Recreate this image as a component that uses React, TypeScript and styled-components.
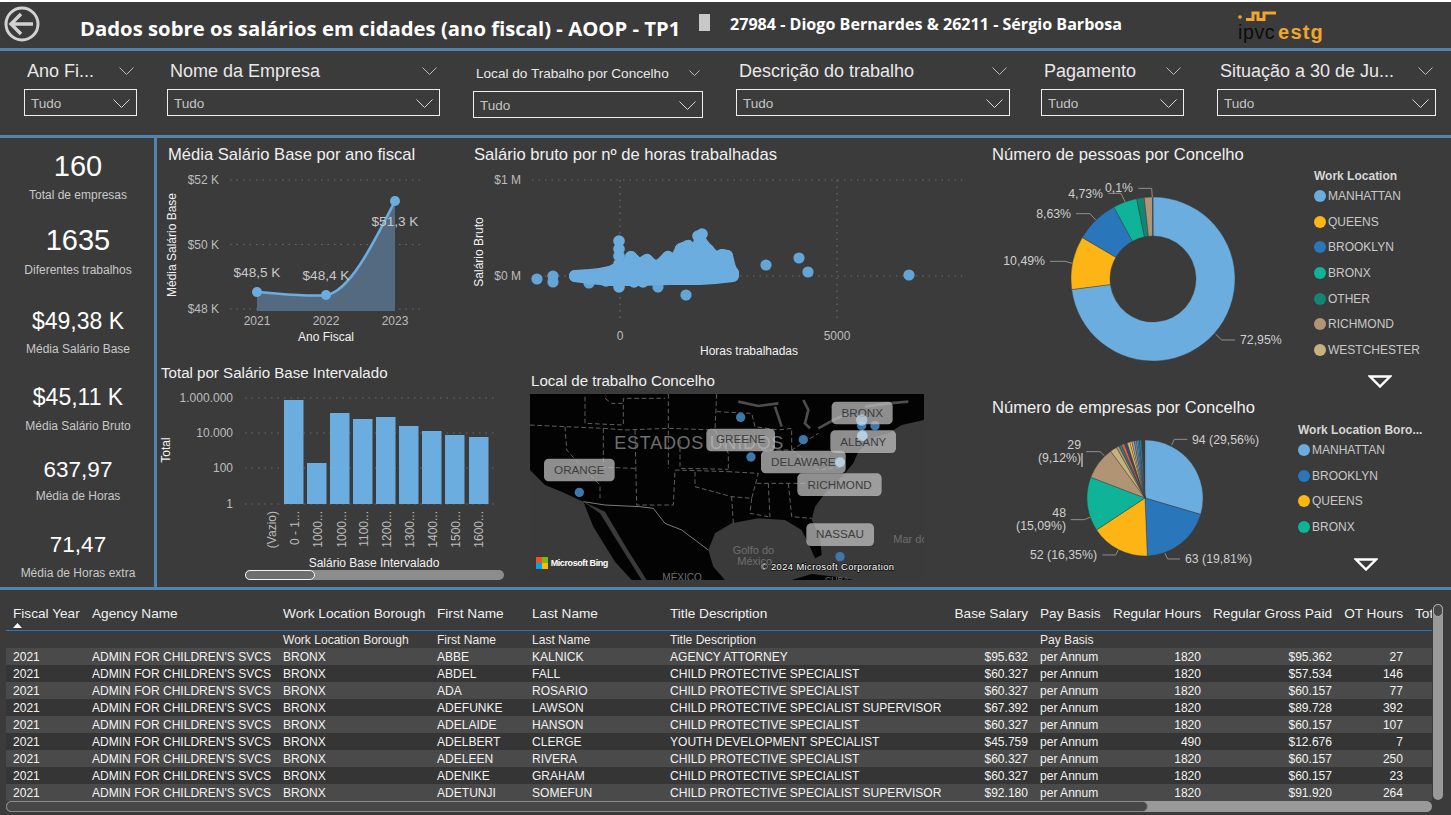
import React from "react";
import styled, { createGlobalStyle } from "styled-components";

const BG = "#3b3b3b";
const RULE = "#5283ad";
const SKY = "#6cade0";
const SANS = `"Liberation Sans", Arial, sans-serif`;

const Global = createGlobalStyle`
  html, body { margin: 0; padding: 0; background: ${BG}; }
  body { font-family: ${SANS}; }
`;

const Page = styled.div`
  width: 1451px; height: 815px; overflow: hidden; background: ${BG}; color: #fff;
  display: flex; flex-direction: column;
`;
const Header = styled.header`
  height: 46px; border-top: 2px solid #fff; display: flex; align-items: flex-start; flex: none;
`;
const BackIcon = styled.svg`
  width: 36px; height: 36px; margin: 4px 0 0 4px; flex: none;
`;
const HeaderTitle = styled.h1`
  width: 619px; margin: 15px 0 0 40px; flex: none; white-space: nowrap;
  font: 700 20.3px/22px "Open Sans", sans-serif; color: #fff;
`;
const Marker = styled.div`
  width: 11px; height: 17px; margin-top: 12px; background: #c8c8c8; flex: none;
`;
const Authors = styled.div`
  width: 508px; margin: 12px 0 0 20px; flex: none; white-space: nowrap;
  font: 700 16.1px/20px "Open Sans", sans-serif; color: #fff;
`;
const Logo = styled.div`
  width: 90px; flex: none; margin-top: 9px; display: flex; flex-direction: column;
`;
const LogoWave = styled.svg`
  width: 42px; height: 11px; display: block;
`;
const LogoWords = styled.div`
  display: flex; align-items: baseline; margin-top: 1px; line-height: 18px;
`;
const LogoIpvc = styled.span`
  font: 400 19.5px/18px "Liberation Sans", sans-serif; color: #0c0c0c; letter-spacing: .6px;
`;
const LogoEstg = styled.span`
  font: 700 20px/18px "Liberation Sans", sans-serif; color: #f2a62a; margin-left: 3px; letter-spacing: 1.2px;
`;
const Rule = styled.div`
  height: 3px; background: ${RULE}; flex: none;
`;
const Filters = styled.section`
  height: 84px; flex: none; display: flex; padding: 8px 0 0 24px; box-sizing: border-box;
`;
const Slicer = styled.div<{ $w: number; $mr: number; $pt?: number }>`
  width: ${p => p.$w}px; margin-right: ${p => p.$mr}px; padding-top: ${p => p.$pt ?? 0}px; flex: none;
`;
const SlicerHead = styled.div`
  height: 24px; padding: 0 3px; display: flex; align-items: center; justify-content: space-between;
`;
const SlicerLabel = styled.span<{ $small?: boolean }>`
  font-size: ${p => (p.$small ? 13.6 : 18)}px; color: #e8e8e8; white-space: nowrap;
`;
const Dropdown = styled.div`
  height: 27px; margin-top: 6px; box-sizing: border-box; border: 1px solid #eee;
  padding: 2px 6px 0; display: flex; align-items: center; justify-content: space-between;
  font-size: 13.5px; color: #c4c4c4;
`;
const Chevron = styled.svg<{ $w: number; $h: number }>`
  width: ${p => p.$w}px; height: ${p => p.$h}px; flex: none;
`;
const Main = styled.main`
  height: 449px; flex: none; display: flex;
`;
const KpiColumn = styled.aside`
  width: 157px; flex: none; padding: 11px 0 0 2px; box-sizing: border-box;
  border-right: 3px solid ${RULE};
`;
const Kpi = styled.div<{ $h: number }>`
  height: ${p => p.$h}px; text-align: center;
`;
const KpiValue = styled.div<{ $size: number }>`
  font-size: ${p => p.$size}px; line-height: 34px; color: #fff;
`;
const KpiLabel = styled.div<{ $mt: number }>`
  font-size: 12px; line-height: 14px; color: #c8c8c8; margin-top: ${p => p.$mt}px;
`;
const Center = styled.div`
  width: 828px; flex: none; display: flex; flex-direction: column;
`;
const ChartRow = styled.div<{ $h: number }>`
  height: ${p => p.$h}px; display: flex; flex: none;
`;
const Panel = styled.div<{ $w: number }>`
  width: ${p => p.$w}px; flex: none;
`;
const PanelTitle = styled.h2<{ $x: number; $top: number }>`
  margin: ${p => p.$top}px 0 0 ${p => p.$x}px; font-size: 16.6px; line-height: 18px; font-weight: 400;
  color: #f0f0f0; white-space: nowrap;
`;
const SmallTitle = styled(PanelTitle)`
  font-size: 15.1px; line-height: 17px;
`;
const ChartSvg = styled.svg<{ $w: number; $h: number }>`
  display: block; width: ${p => p.$w}px; height: ${p => p.$h}px; flex: none;
`;
const MapFrame = styled.div`
  width: 394px; height: 186px; margin: 5px 0 0 5px;
`;
const ChartScroll = styled.div`
  width: 259px; height: 10px; margin: 2px 0 0 88px; border-radius: 5px; background: #8c8c8c;
`;
const ChartThumb = styled.div`
  width: 70px; height: 10px; box-sizing: border-box; border: 1.5px solid #f2f2f2; border-radius: 5px;
  background: #6e6e6e;
`;
const Right = styled.div`
  flex: 1; min-width: 0; display: flex; flex-direction: column;
`;
const RightPanel = styled.div<{ $h: number }>`
  height: ${p => p.$h}px; flex: none; overflow: hidden;
`;
const PanelBody = styled.div`
  display: flex;
`;
const Legend = styled.div<{ $pt: number }>`
  padding-top: ${p => p.$pt}px;
`;
const LegendTitle = styled.div`
  font-size: 12px; line-height: 13px; font-weight: 700; color: #d6d6d6; white-space: nowrap;
`;
const LegendRow = styled.div`
  height: 25.7px; display: flex; align-items: center; gap: 2px; font-size: 12px; color: #c8c8c8; white-space: nowrap;
`;
const LegendDot = styled.span<{ $c: string }>`
  width: 12px; height: 12px; border-radius: 50%; background: ${p => p.$c}; flex: none;
`;
const MoreIcon = styled.svg<{ $ml: number; $mt: number }>`
  display: block; width: 24px; height: 13px; margin: ${p => p.$mt}px 0 0 ${p => p.$ml}px;
`;
const AxisText = styled.text`
  font-family: ${SANS}; font-size: 12px; fill: #bdbdbd;
`;
const AxisName = styled(AxisText)`
  fill: #f2f2f2;
`;
const DataLabel = styled(AxisText)`
  font-size: 13.6px; fill: #c8c8c8;
`;
const PieLabel = styled(AxisText)`
  font-size: 12.3px; fill: #cfcfcf;
`;
const MapChipText = styled.text`
  font-family: ${SANS}; font-size: 35px; fill: #3c3c3c; text-anchor: middle;
`;
const MapGhost = styled.text<{ $s: number }>`
  font-family: ${SANS}; font-size: ${p => p.$s}px; fill: #6e6e6e;
`;
const MapNote = styled.text<{ $s: number; $w?: number }>`
  font-family: ${SANS}; font-size: ${p => p.$s}px; font-weight: ${p => p.$w ?? 400}; fill: #fff;
  paint-order: stroke;
`;
const TableSection = styled.section`
  flex: 1; min-height: 0; display: flex; padding-left: 6px;
`;
const TableArea = styled.div`
  width: 1426px; flex: none;
`;
const Row = styled.div`
  display: grid; grid-template-columns: 86px 191px 154px 95px 138px 280px 90px 70px 91px 131px 71px 29px;
`;
const HeadRow = styled(Row)`
  height: 40px; padding-top: 16px; box-sizing: border-box; font-size: 13.65px; line-height: 16px; color: #f0f0f0;
`;
const HeadLine = styled.div`
  height: 1px; background: #2a76bb;
`;
const FilterRow = styled(Row)`
  height: 17px; font-size: 12.05px; line-height: 19px; color: #ececec;
`;
const DataRow = styled(Row)<{ $odd: boolean }>`
  height: 17px; font-size: 12.05px; line-height: 19px; color: #f2f2f2;
  background: ${p => (p.$odd ? "#4a4a4a" : "#353535")};
`;
const Cell = styled.div<{ $right?: boolean; $pad?: number }>`
  white-space: nowrap;
  text-align: ${p => (p.$right ? "right" : "left")};
  padding: ${p => (p.$right ? `0 ${p.$pad ?? 0}px 0 0` : `0 0 0 ${p.$pad ?? 0}px`)};
`;
const ClippedCell = styled(Cell)`
  overflow: hidden;
`;
const SortMark = styled.svg`
  display: block; width: 9px; height: 5px; margin: 1px 0 0 0;
`;
const HScroll = styled.div`
  height: 11px; background: #9a9a9a; border-radius: 6px;
`;
const HThumb = styled.div`
  width: 1142px; height: 11px; box-sizing: border-box; background: #474747; border: 1.5px solid #8c8c8c; border-radius: 6px;
`;
const VScroll = styled.div`
  width: 10px; height: 196px; margin: 14px 0 0 1px; background: #9a9a9a; border-radius: 5px; flex: none;
`;
const VThumb = styled.div`
  width: 10px; height: 13px; box-sizing: border-box; background: #474747; border: 1.5px solid #aaa; border-radius: 5px;
`;

const DropIcon = ({ w, h, c = "#d8d8d8" }: { w: number; h: number; c?: string }) => (
  <Chevron $w={w} $h={h} viewBox={`0 0 ${w} ${h}`}>
    <polyline points={`0.5,0.5 ${w / 2},${h - 0.5} ${w - 0.5},0.5`} fill="none" stroke={c} strokeWidth="1" />
  </Chevron>
);

const slicers = [
  { t: "Ano Fi...", w: 113, mr: 30 },
  { t: "Nome da Empresa", w: 273, mr: 33 },
  { t: "Local do Trabalho por Concelho", w: 230, mr: 33, small: true, pt: 2 },
  { t: "Descrição do trabalho", w: 274, mr: 31 },
  { t: "Pagamento", w: 143, mr: 33 },
  { t: "Situação a 30 de Ju...", w: 219, mr: 0 },
];

const kpis = [
  { v: "160", l: "Total de empresas", s: 29, h: 74, mt: 5 },
  { v: "1635", l: "Diferentes trabalhos", s: 29, h: 81, mt: 6 },
  { v: "$49,38 K", l: "Média Salário Base", s: 23, h: 76, mt: 4 },
  { v: "$45,11 K", l: "Média Salário Bruto", s: 23, h: 73, mt: 5 },
  { v: "637,97", l: "Média de Horas", s: 22.5, h: 75, mt: 2 },
  { v: "71,47", l: "Média de Horas extra", s: 22.5, h: 54, mt: 4 },
];

const polar = (cx: number, cy: number, r: number, deg: number) => {
  const a = ((deg - 90) * Math.PI) / 180;
  return [cx + r * Math.cos(a), cy + r * Math.sin(a)];
};
const slicePath = (cx: number, cy: number, r: number, r0: number, a0: number, a1: number) => {
  const [x0, y0] = polar(cx, cy, r, a0);
  const [x1, y1] = polar(cx, cy, r, a1);
  const large = a1 - a0 > 180 ? 1 : 0;
  if (r0 === 0) return `M${cx},${cy}L${x0},${y0}A${r},${r} 0 ${large} 1 ${x1},${y1}Z`;
  const [x2, y2] = polar(cx, cy, r0, a1);
  const [x3, y3] = polar(cx, cy, r0, a0);
  return `M${x0},${y0}A${r},${r} 0 ${large} 1 ${x1},${y1}L${x2},${y2}A${r0},${r0} 0 ${large} 0 ${x3},${y3}Z`;
};
const Slices = ({ data, cx, cy, r, r0 }: { data: [number, string][]; cx: number; cy: number; r: number; r0: number }) => {
  let acc = 0;
  return (
    <g>
      {data.map(([pct, c], i) => {
        const a0 = acc * 3.6;
        acc += pct;
        return <path key={i} d={slicePath(cx, cy, r, r0, a0, acc * 3.6)} fill={c} stroke={BG} strokeWidth=".4" />;
      })}
    </g>
  );
};

const donut: [number, string][] = [
  [72.95, SKY], [10.49, "#fdb515"], [8.63, "#2a76bb"], [4.73, "#0fb397"], [1.5, "#128573"], [1.6, "#b09474"], [0.1, "#2a76bb"],
];
const pie: [number, string][] = [
  [29.56, SKY], [19.81, "#2a76bb"], [16.35, "#fdb515"], [15.09, "#0fb397"], [9.12, "#b09474"],
  [1.9, "#c7b27e"], [0.8, "#b09474"], [0.7, "#128573"], [0.9, "#e9563f"], [0.8, "#25508f"], [0.8, "#e8b64a"], [0.5, "#f6d860"],
  [0.7, "#8d9db5"], [0.6, "#8a78b5"], [0.4, "#5fb3c4"], [0.4, "#0fb397"], [0.57, "#2a76bb"],
];
const legendA: [string, string][] = [
  ["MANHATTAN", SKY], ["QUEENS", "#fdb515"], ["BROOKLYN", "#2a76bb"], ["BRONX", "#0fb397"], ["OTHER", "#128573"], ["RICHMOND", "#b09474"], ["WESTCHESTER", "#c7b27e"],
];
const legendB: [string, string][] = [
  ["MANHATTAN", SKY], ["BROOKLYN", "#2a76bb"], ["QUEENS", "#fdb515"], ["BRONX", "#0fb397"],
];

const contour: [number, number][] = [
  [575, 276], [590, 275], [600, 274], [610, 272], [618, 268], [625, 270], [631, 257], [636, 262], [640, 264], [647, 260], [653, 266], [660, 265], [668, 257],
  [675, 262], [681, 249], [688, 246], [692, 252], [695, 256], [700, 240], [704, 246], [708, 250], [715, 258], [722, 255], [727, 256], [730, 268], [733, 273],
];
const bottom: [number, number][] = [
  [733, 276], [715, 278], [700, 279], [670, 279], [640, 280], [610, 280], [590, 278], [575, 276],
];
const inside: [number, number][] = [
  [619, 241], [619, 249], [619, 256], [619, 264], [619, 272], [619, 280], [619, 287], [606, 281], [634, 282], [643, 282], [698, 279], [710, 278], [702, 234], [698, 236],
];
const outliers: [number, number][] = [
  [537, 279], [553, 276], [553, 282], [589, 283], [658, 287], [686, 295], [766, 265], [799, 258], [808, 272], [909, 275],
];

const bars = [
  [284, 400], [307, 463], [330, 413], [353, 419], [376, 417], [399, 426], [422, 431], [445, 435], [469, 437],
];
const barLabels: [number, string][] = [
  [272, "(Vazio)"], [295, "0 - 1..."], [318, "1000..."], [342, "1000..."], [364, "1100..."], [387, "1200..."], [410, "1300..."], [433, "1400..."], [456, "1500..."], [479, "1600..."],
];

const chips = [
  ["BRONX", 920, 95, 183, 1012, 140],
  ["GREENE", 544, 176, 206, 647, 219],
  ["ALBANY", 916, 181, 197, 1015, 227],
  ["DELAWARE", 708, 242, 254, 835, 287],
  ["ORANGE", 57, 266, 212, 163, 311],
  ["RICHMOND", 817, 310, 253, 944, 356],
  ["NASSAU", 844, 460, 203, 945, 503],
] as const;

const stateLines = [
  "M15,165 L120,170 L235,175 L300,180 L430,175 L570,180",
  "M120,170 L125,240 L170,290 L225,345 L225,385",
  "M235,175 L235,292 L330,295",
  "M180,80 L180,160 L295,165 L295,85 L420,85",
  "M330,180 L335,405 L445,405 L450,300 L610,305",
  "M465,210 L465,295 L610,298",
  "M430,72 L430,295",
  "M575,72 L570,180 L610,250 L610,305 L700,310 L680,385 L620,380 L510,350 L510,305",
  "M575,125 L680,130 L690,170 L760,180 L800,175 L800,240",
  "M695,340 L820,340 L880,340",
  "M730,340 L735,445",
  "M790,340 L800,440 L860,445",
  "M620,380 L625,460",
  "M680,385 L675,430 L730,440",
  "M710,240 L800,240 L880,190",
  "M800,240 L880,300 L960,290",
  "M240,85 L260,100 L295,100",
];

const cols = ["Work Location Borough", "First Name", "Last Name", "Title Description"];
const rows = [
  ["ABBE", "KALNICK", "AGENCY ATTORNEY", "$95.632", "1820", "$95.362", "27"],
  ["ABDEL", "FALL", "CHILD PROTECTIVE SPECIALIST", "$60.327", "1820", "$57.534", "146"],
  ["ADA", "ROSARIO", "CHILD PROTECTIVE SPECIALIST", "$60.327", "1820", "$60.157", "77"],
  ["ADEFUNKE", "LAWSON", "CHILD PROTECTIVE SPECIALIST SUPERVISOR", "$67.392", "1820", "$89.728", "392"],
  ["ADELAIDE", "HANSON", "CHILD PROTECTIVE SPECIALIST", "$60.327", "1820", "$60.157", "107"],
  ["ADELBERT", "CLERGE", "YOUTH DEVELOPMENT SPECIALIST", "$45.759", "490", "$12.676", "7"],
  ["ADELEEN", "RIVERA", "CHILD PROTECTIVE SPECIALIST", "$60.327", "1820", "$60.157", "250"],
  ["ADENIKE", "GRAHAM", "CHILD PROTECTIVE SPECIALIST", "$60.327", "1820", "$60.157", "23"],
  ["ADETUNJI", "SOMEFUN", "CHILD PROTECTIVE SPECIALIST SUPERVISOR", "$92.180", "1820", "$91.920", "264"],
];

const Leader = ({ p }: { p: string }) => <polyline points={p} fill="none" stroke="#8f8f8f" strokeWidth="3" />;

export default function App() {
  return (
    <Page>
      <Global />
      <Header>
        <BackIcon viewBox="0 0 36 36">
          <circle cx="18" cy="18" r="16" fill="none" stroke="#d2d2d2" strokeWidth="3" />
          <path d="M17 8 L7 18 L17 28 M7.5 18 H29" fill="none" stroke="#d2d2d2" strokeWidth="3.4" />
        </BackIcon>
        <HeaderTitle>Dados sobre os salários em cidades (ano fiscal) - AOOP - TP1</HeaderTitle>
        <Marker />
        <Authors>27984 - Diogo Bernardes &amp; 26211 - Sérgio Barbosa</Authors>
        <Logo>
          <LogoWave viewBox="0 0 42 11">
            <circle cx="2" cy="6" r="1.8" fill="#f2a62a" />
            <polyline points="8,8.5 15,8.5 15,2 20,2 20,8.5 26,8.5 26,2 38,2" fill="none" stroke="#f2a62a" strokeWidth="3" />
          </LogoWave>
          <LogoWords>
            <LogoIpvc>ipvc</LogoIpvc>
            <LogoEstg>estg</LogoEstg>
          </LogoWords>
        </Logo>
      </Header>
      <Rule />
      <Filters>
        {slicers.map(s => (
          <Slicer key={s.t} $w={s.w} $mr={s.mr} $pt={s.pt}>
            <SlicerHead>
              <SlicerLabel $small={s.small}>{s.t}</SlicerLabel>
              <DropIcon w={s.small ? 11 : 15} h={s.small ? 6 : 8} c="#bdbdbd" />
            </SlicerHead>
            <Dropdown>
              Tudo
              <DropIcon w={17} h={9} />
            </Dropdown>
          </Slicer>
        ))}
      </Filters>
      <Rule />
      <Main>
        <KpiColumn>
          {kpis.map(k => (
            <Kpi key={k.l} $h={k.h}>
              <KpiValue $size={k.s}>{k.v}</KpiValue>
              <KpiLabel $mt={k.mt}>{k.l}</KpiLabel>
            </Kpi>
          ))}
        </KpiColumn>
        <Center>
          <ChartRow $h={224}>
            <Panel $w={303}>
              <PanelTitle $x={11} $top={8}>Média Salário Base por ano fiscal</PanelTitle>
              <ChartSvg $w={303} $h={198} viewBox="157 164 303 198">
                {[180, 244.5, 309].map(y => (
                  <line key={y} x1="230" x2="421" y1={y} y2={y} stroke="#6b6b6b" strokeDasharray="1.5 5" strokeWidth="1.2" />
                ))}
                <AxisText x="219" y="184" textAnchor="end">$52 K</AxisText>
                <AxisText x="219" y="249" textAnchor="end">$50 K</AxisText>
                <AxisText x="219" y="313" textAnchor="end">$48 K</AxisText>
                <path d="M257,292 C285,294 310,297 326,295 C350,292 375,240 395,201 L395,311 L257,311 Z" fill="#536a80" />
                <path d="M257,292 C285,294 310,297 326,295 C350,292 375,240 395,201" fill="none" stroke={SKY} strokeWidth="2.6" />
                <circle cx="257" cy="292" r="5" fill={SKY} />
                <circle cx="326" cy="295" r="5" fill={SKY} />
                <circle cx="395" cy="201" r="5" fill={SKY} />
                <DataLabel x="257" y="277" textAnchor="middle">$48,5 K</DataLabel>
                <DataLabel x="326" y="280" textAnchor="middle">$48,4 K</DataLabel>
                <DataLabel x="395" y="226" textAnchor="middle">$51,3 K</DataLabel>
                <AxisText x="257" y="325" textAnchor="middle">2021</AxisText>
                <AxisText x="326" y="325" textAnchor="middle">2022</AxisText>
                <AxisText x="395" y="325" textAnchor="middle">2023</AxisText>
                <AxisName x="326" y="341" textAnchor="middle">Ano Fiscal</AxisName>
                <AxisName transform="translate(176 245) rotate(-90)" textAnchor="middle">Média Salário Base</AxisName>
              </ChartSvg>
            </Panel>
            <Panel $w={525}>
              <PanelTitle $x={14} $top={8}>Salário bruto por nº de horas trabalhadas</PanelTitle>
              <ChartSvg $w={525} $h={198} viewBox="460 164 525 198">
                <g stroke="#6b6b6b" strokeDasharray="1.5 5" strokeWidth="1.2">
                  <line x1="532" x2="962" y1="180" y2="180" />
                  <line x1="532" x2="962" y1="276" y2="276" />
                  <line x1="620" x2="620" y1="180" y2="323" />
                  <line x1="837" x2="837" y1="180" y2="323" />
                </g>
                <AxisText x="521" y="184" textAnchor="end">$1 M</AxisText>
                <AxisText x="521" y="280" textAnchor="end">$0 M</AxisText>
                <AxisText x="620" y="340" textAnchor="middle">0</AxisText>
                <AxisText x="837" y="340" textAnchor="middle">5000</AxisText>
                <AxisName x="749" y="355" textAnchor="middle">Horas trabalhadas</AxisName>
                <AxisName transform="translate(483 252) rotate(-90)" textAnchor="middle">Salário Bruto</AxisName>
                {outliers.map(([x, y]) => <circle key={`${x}-${y}`} cx={x} cy={y} r="5.6" fill="#64a5d8" />)}
                <polygon
                  points={[...contour, ...bottom].map(p => p.join(",")).join(" ")}
                  fill={SKY} stroke={SKY} strokeWidth="12" strokeLinejoin="round"
                />
                {contour.map(([x, y]) => <circle key={x} cx={x} cy={y} r="6" fill={SKY} />)}
                {inside.map(([x, y]) => <circle key={`${x}-${y}`} cx={x} cy={y} r="5.8" fill={SKY} />)}
              </ChartSvg>
            </Panel>
          </ChartRow>
          <ChartRow $h={225}>
            <Panel $w={368}>
              <SmallTitle $x={4} $top={2}>Total por Salário Base Intervalado</SmallTitle>
              <ChartSvg $w={368} $h={187} viewBox="157 381 368 187">
                {[398, 433, 468, 504].map(y => (
                  <line key={y} x1="245" x2="498" y1={y} y2={y} stroke="#6b6b6b" strokeDasharray="1.5 5" strokeWidth="1.2" />
                ))}
                <AxisText x="233" y="402" textAnchor="end">1.000.000</AxisText>
                <AxisText x="233" y="437" textAnchor="end">10.000</AxisText>
                <AxisText x="233" y="472" textAnchor="end">100</AxisText>
                <AxisText x="233" y="508" textAnchor="end">1</AxisText>
                {bars.map(([x, y]) => <rect key={x} x={x} y={y} width="19.5" height={504 - y} fill={SKY} />)}
                {barLabels.map(([x, t]) => (
                  <AxisText key={x} transform={`translate(${x + 4} 511) rotate(-90)`} textAnchor="end">{t}</AxisText>
                ))}
                <AxisName x="374" y="567" textAnchor="middle">Salário Base Intervalado</AxisName>
                <AxisName transform="translate(170 450) rotate(-90)" textAnchor="middle">Total</AxisName>
              </ChartSvg>
              <ChartScroll><ChartThumb /></ChartScroll>
            </Panel>
            <Panel $w={460}>
              <SmallTitle $x={6} $top={10}>Local de trabalho Concelho</SmallTitle>
              <MapFrame>
                <ChartSvg $w={394} $h={186} viewBox="15 72 1182 558">
                  <rect x="15" y="72" width="1182" height="558" fill="#3a3a3a" />
                  <path fill="#030303" d="M15,72 H1197 V150 L1130,165 L1090,190 L1040,205 L1000,245 L985,280 L950,320 L900,370 L870,410 L860,450 L885,500 L890,555 L870,565 L855,530 L830,480 L780,450 L700,445 L620,460 L570,490 L550,540 L565,590 L600,630 H365 L305,535 L240,425 L175,395 L110,365 L60,345 L15,300 Z" />
                  <path fill="#030303" d="M175,395 L225,430 L290,535 L350,630 H320 L270,575 L205,470 Z" />
                  <path fill="#030303" d="M800,630 L860,612 L945,622 L985,630 Z" />
                  <g fill="none" stroke="#4d4d4d" strokeWidth="8">
                    <path d="M640,95 L700,108 L760,100" />
                    <path d="M750,110 L770,170" />
                    <path d="M835,90 L850,120 L840,160 L855,175" />
                    <path d="M880,175 L925,150 L970,130" />
                    <path d="M1020,110 L1090,100 L1150,95" />
                  </g>
                  <g fill="none" stroke="#6e6e6e" strokeWidth="2.6" strokeDasharray="14 8">
                    {stateLines.map(d => <path key={d} d={d} />)}
                  </g>
                  <path d="M175,395 L240,405 L345,410 L385,415 L420,460 L470,480 L510,510 L550,540" fill="none" stroke="#7a7a7a" strokeWidth="3" />
                  <MapGhost $s={54} x="268" y="236" textLength="507">ESTADOS UNIDOS</MapGhost>
                  <MapGhost $s={33} x="623" y="551">Golfo do</MapGhost>
                  <MapGhost $s={33} x="637" y="584">México</MapGhost>
                  <MapGhost $s={33} x="1105" y="518">Mar do</MapGhost>
                  <MapGhost $s={30} x="412" y="633">MÉXICO</MapGhost>
                  <MapGhost $s={26} x="900" y="638">CUBA</MapGhost>
                  <circle cx="647" cy="142" r="14" fill="#3d78ab" />
                  <circle cx="678" cy="261" r="14" fill="#3d78ab" />
                  <circle cx="835" cy="209" r="14" fill="#3d78ab" />
                  <circle cx="163" cy="367" r="14" fill="#3d78ab" />
                  <circle cx="945" cy="560" r="14" fill="#3d78ab" />
                  <circle cx="1050" cy="167" r="14" fill="#3d78ab" />
                  <circle cx="1010" cy="167" r="14" fill="#3d78ab" />
                  {chips.map(([t, x, y, w, tx, ty]) => (
                    <g key={t}>
                      <rect x={x} y={y} width={w} height="68" rx="14" fill="#c0c0c0" fillOpacity=".74" />
                      <MapChipText x={tx} y={ty}>{t}</MapChipText>
                    </g>
                  ))}
                  <circle cx="1010" cy="150" r="17" fill="#bcd9ee" fillOpacity=".7" />
                  <circle cx="1012" cy="197" r="16" fill="#bcd9ee" fillOpacity=".85" />
                  <circle cx="945" cy="277" r="15" fill="#bcd9ee" fillOpacity=".85" />
                  <rect x="33" y="561" width="18" height="18" fill="#f25022" />
                  <rect x="51" y="561" width="18" height="18" fill="#7fba00" />
                  <rect x="33" y="579" width="18" height="18" fill="#00a4ef" />
                  <rect x="51" y="579" width="18" height="18" fill="#ffb900" />
                  <MapNote $s={27} $w={700} x="77" y="588" textLength="173">Microsoft Bing</MapNote>
                  <MapNote $s={28} x="707" y="599" textLength="400" stroke="#111" strokeWidth="4">© 2024 Microsoft Corporation</MapNote>
                </ChartSvg>
              </MapFrame>
            </Panel>
          </ChartRow>
        </Center>
        <Right>
          <RightPanel $h={252}>
            <PanelTitle $x={7} $top={8}>Número de pessoas por Concelho</PanelTitle>
            <PanelBody>
              <ChartSvg $w={329} $h={226} viewBox="985 164 329 226">
                <Slices data={donut} cx={1153} cy={279} r={82} r0={43} />
                <g transform="translate(985 140) scale(.3333)">
                  <Leader p="692,583 710,600 750,600" />
                  <Leader p="195,364 240,364 262,370" />
                  <Leader p="273,221 315,221 332,240" />
                  <Leader p="370,160 408,160 420,185" />
                  <Leader p="460,145 500,145 502,172" />
                </g>
                <PieLabel x="1240" y="344">72,95%</PieLabel>
                <PieLabel x="1045" y="265" textAnchor="end">10,49%</PieLabel>
                <PieLabel x="1071" y="218" textAnchor="end">8,63%</PieLabel>
                <PieLabel x="1103" y="198" textAnchor="end">4,73%</PieLabel>
                <PieLabel x="1133" y="192" textAnchor="end">0,1%</PieLabel>
              </ChartSvg>
              <Legend $pt={6}>
                <LegendTitle>Work Location</LegendTitle>
                {legendA.map(([t, c]) => (
                  <LegendRow key={t}><LegendDot $c={c} />{t}</LegendRow>
                ))}
                <MoreIcon $ml={54} $mt={12} viewBox="0 0 24 13">
                  <polygon points="2,1.5 22,1.5 12,11.5" fill={BG} stroke="#fff" strokeWidth="2.4" />
                </MoreIcon>
              </Legend>
            </PanelBody>
          </RightPanel>
          <RightPanel $h={197}>
            <PanelTitle $x={7} $top={9}>Número de empresas por Concelho</PanelTitle>
            <PanelBody>
              <ChartSvg $w={313} $h={170} viewBox="985 417 313 170">
                <Slices data={pie} cx={1145} cy={498} r={58} r0={0} />
                <g transform="translate(985 390) scale(.3333)">
                  <Leader p="560,165 568,148 607,148" />
                  <Leader p="540,490 548,507 585,507" />
                  <Leader p="352,495 392,495 400,480" />
                  <Leader p="257,389 298,389 315,382" />
                  <Leader p="303,185 345,185 358,197" />
                </g>
                <line x1="1082" x2="1082" y1="453" y2="467" stroke="#eee" strokeWidth="1" />
                <PieLabel x="1192" y="444">94 (29,56%)</PieLabel>
                <PieLabel x="1185" y="563">63 (19,81%)</PieLabel>
                <PieLabel x="1097" y="559" textAnchor="end">52 (16,35%)</PieLabel>
                <PieLabel x="1066" y="517" textAnchor="end">48</PieLabel>
                <PieLabel x="1066" y="530" textAnchor="end">(15,09%)</PieLabel>
                <PieLabel x="1081" y="449" textAnchor="end">29</PieLabel>
                <PieLabel x="1081" y="462" textAnchor="end">(9,12%)</PieLabel>
              </ChartSvg>
              <Legend $pt={7}>
                <LegendTitle>Work Location Boro...</LegendTitle>
                {legendB.map(([t, c]) => (
                  <LegendRow key={t}><LegendDot $c={c} />{t}</LegendRow>
                ))}
                <MoreIcon $ml={56} $mt={18} viewBox="0 0 24 13">
                  <polygon points="2,1.5 22,1.5 12,11.5" fill={BG} stroke="#fff" strokeWidth="2.4" />
                </MoreIcon>
              </Legend>
            </PanelBody>
          </RightPanel>
        </Right>
      </Main>
      <Rule />
      <TableSection>
        <TableArea>
          <HeadRow>
            <Cell $pad={7}>
              Fiscal Year
              <SortMark viewBox="0 0 9 5"><polygon points="4.5,0 9,5 0,5" fill="#fff" /></SortMark>
            </Cell>
            <Cell>Agency Name</Cell>
            {cols.map(c => <Cell key={c}>{c}</Cell>)}
            <Cell $right $pad={12}>Base Salary</Cell>
            <Cell>Pay Basis</Cell>
            <Cell $right>Regular Hours</Cell>
            <Cell $right>Regular Gross Paid</Cell>
            <Cell $right>OT Hours</Cell>
            <ClippedCell $pad={12}>Total OT Paid</ClippedCell>
          </HeadRow>
          <HeadLine />
          <FilterRow>
            <Cell />
            <Cell />
            {cols.map(c => <Cell key={c}>{c}</Cell>)}
            <Cell />
            <Cell>Pay Basis</Cell>
          </FilterRow>
          {rows.map((r, i) => (
            <DataRow key={r[0]} $odd={i % 2 === 0}>
              <Cell $pad={7}>2021</Cell>
              <Cell>ADMIN FOR CHILDREN'S SVCS</Cell>
              <Cell>BRONX</Cell>
              <Cell>{r[0]}</Cell>
              <Cell>{r[1]}</Cell>
              <Cell>{r[2]}</Cell>
              <Cell $right $pad={12}>{r[3]}</Cell>
              <Cell>per Annum</Cell>
              <Cell $right>{r[4]}</Cell>
              <Cell $right>{r[5]}</Cell>
              <Cell $right>{r[6]}</Cell>
              <Cell />
            </DataRow>
          ))}
          <HScroll><HThumb /></HScroll>
        </TableArea>
        <VScroll><VThumb /></VScroll>
      </TableSection>
    </Page>
  );
}
